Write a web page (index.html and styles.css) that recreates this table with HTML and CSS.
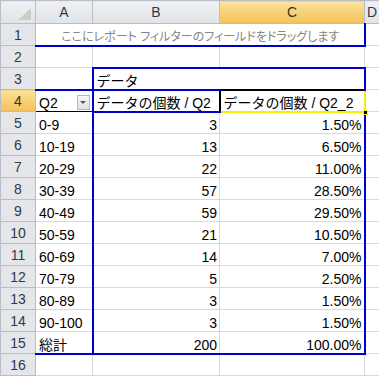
FILE: index.html
```html
<!DOCTYPE html>
<html lang="ja">
<head>
    <meta charset="UTF-8">
    <title>ピボットテーブル</title>
    <link rel="stylesheet" href="styles.css">
</head>
<body>

<table class="sheet">
    <colgroup>
        <col class="col-head">
        <col class="col-a">
        <col class="col-b">
        <col class="col-c">
        <col class="col-d">
    </colgroup>
    <thead>
        <tr>
            <th class="corner"><div class="corner-box"><span class="corner-mark"></span></div></th>
            <th>A</th>
            <th>B</th>
            <th class="hl">C</th>
            <th class="last"><span class="head-d">D</span></th>
        </tr>
    </thead>
    <tbody>
        <tr>
            <th>1</th>
            <td colspan="3" class="drop-zone">ここにレポート フィルターのフィールドをドラッグします</td>
            <td></td>
        </tr>
        <tr>
            <th>2</th>
            <td></td><td></td><td></td><td></td>
        </tr>
        <tr>
            <th>3</th>
            <td></td>
            <td colspan="2" class="col-area">データ</td>
            <td></td>
        </tr>
        <tr>
            <th class="hl">4</th>
            <td class="row-field"><div class="field-box"><span>Q2</span><span class="dd"></span></div></td>
            <td class="val-head">データの個数 / Q2</td>
            <td class="val-head active">データの個数 / Q2_2<span class="fill-handle"></span></td>
            <td></td>
        </tr>
        <tr><th>5</th><td class="lbl">0-9</td><td class="num">3</td><td class="pct">1.50%</td><td></td></tr>
        <tr><th>6</th><td class="lbl">10-19</td><td class="num">13</td><td class="pct">6.50%</td><td></td></tr>
        <tr><th>7</th><td class="lbl">20-29</td><td class="num">22</td><td class="pct">11.00%</td><td></td></tr>
        <tr><th>8</th><td class="lbl">30-39</td><td class="num">57</td><td class="pct">28.50%</td><td></td></tr>
        <tr><th>9</th><td class="lbl">40-49</td><td class="num">59</td><td class="pct">29.50%</td><td></td></tr>
        <tr><th>10</th><td class="lbl">50-59</td><td class="num">21</td><td class="pct">10.50%</td><td></td></tr>
        <tr><th>11</th><td class="lbl">60-69</td><td class="num">14</td><td class="pct">7.00%</td><td></td></tr>
        <tr><th>12</th><td class="lbl">70-79</td><td class="num">5</td><td class="pct">2.50%</td><td></td></tr>
        <tr><th>13</th><td class="lbl">80-89</td><td class="num">3</td><td class="pct">1.50%</td><td></td></tr>
        <tr><th>14</th><td class="lbl">90-100</td><td class="num">3</td><td class="pct">1.50%</td><td></td></tr>
        <tr class="total">
            <th>15</th><td class="lbl">総計</td><td class="num">200</td><td class="pct">100.00%</td><td></td>
        </tr>
        <tr><th>16</th><td></td><td></td><td></td><td></td></tr>
    </tbody>
</table>

</body>
</html>
```

FILE: styles.css
```css
body {
    margin: 0;
    background-color: #fff;
    font-family: "Liberation Sans", "Noto Sans CJK JP", sans-serif;
    font-size: 14px;
    color: #000;
    overflow: hidden;
}

.sheet {
    border-collapse: collapse;
    table-layout: fixed;
    width: 386px;
}

.col-head { width: 35px; }
.col-a { width: 57px; }
.col-b { width: 127px; }
.col-c { width: 145px; }
.col-d { width: 22px; }

/* headers */

.sheet th {
    padding: 0;
    font-weight: normal;
    color: #2f3a48;
    text-align: center;
    border: 1px solid #b9bec6;
    background: linear-gradient(#eef0f3, #e1e4e8);
    white-space: nowrap;
    overflow: hidden;
}

.sheet thead tr {
    height: 23px;
}

.sheet thead th {
    line-height: 21px;
}

.sheet tbody th {
    background: #e4e6ea;
    line-height: 20px;
}

.sheet th.hl {
    background: linear-gradient(#fbe3a2, #f8d27a 45%, #f3c25b);
    color: #3a3220;
}

.sheet th.last {
    text-align: left;
    padding-left: 2px;
}

.head-d {
    display: inline-block;
}

.corner-box {
    display: flex;
    justify-content: flex-end;
    align-items: flex-end;
    height: 21px;
    padding: 0 4px 3px 0;
    box-sizing: border-box;
}

.corner-mark {
    width: 0;
    height: 0;
    border-left: 13px solid transparent;
    border-bottom: 12px solid #c7d0c8;
}

/* cells */

.sheet tbody tr {
    height: 22px;
}

.sheet td {
    border: 1px solid #d8d9db;
    padding: 0 2px 0 3px;
    line-height: 16px;
    vertical-align: bottom;
    white-space: nowrap;
    overflow: hidden;
}

.drop-zone {
    text-align: center;
    color: #858585;
    font-size: 12px;
    font-feature-settings: "palt";
    border-bottom: 2px solid #0000cc !important;
    border-right: 2px solid #0000cc !important;
}

.col-area {
    border-top: 2px solid #0000cc !important;
    border-left: 2px solid #0000cc !important;
    border-right: 2px solid #0000cc !important;
}

.row-field {
    border-top: 2px solid #0000cc !important;
    border-bottom: 1px solid #000 !important;
    padding-right: 1px;
}

.field-box {
    display: flex;
    justify-content: space-between;
    align-items: flex-end;
}

.dd {
    width: 13px;
    height: 15px;
    margin-bottom: 1px;
    border: 1px solid #b3b8bf;
    box-sizing: border-box;
    background: linear-gradient(#f6f7f8, #dfe2e6);
    display: flex;
    justify-content: center;
    align-items: center;
}

.dd::after {
    content: "";
    width: 0;
    height: 0;
    border-left: 3px solid transparent;
    border-right: 3px solid transparent;
    border-top: 3px solid #4e5c58;
}

.val-head {
    border-top: 2px solid #0000cc !important;
    border-left: 2px solid #0000cc !important;
    border-bottom: 2px solid #0000cc !important;
}

.val-head.active {
    position: relative;
    overflow: visible;
    border-top: 2px solid #000 !important;
    border-left: 2px solid #000 !important;
    border-right: 2px solid #f5ee00 !important;
    border-bottom: 2px solid #f5ee00 !important;
}

.fill-handle {
    position: absolute;
    right: -4px;
    bottom: -4px;
    width: 5px;
    height: 5px;
    background: #000;
    border: 1px solid #f5ee00;
    box-sizing: border-box;
}

.num {
    text-align: right;
    border-left: 2px solid #0000cc !important;
}

.pct {
    text-align: right;
    padding-right: 5px;
    border-right: 2px solid #0000cc !important;
}

.lbl {
    text-align: left;
}

.total td {
    border-top: 1px solid #000 !important;
    border-bottom: 2px solid #0000cc !important;
}

.total td:last-child {
    border-top: 1px solid #d8d9db !important;
    border-bottom: 1px solid #d8d9db !important;
}
```
